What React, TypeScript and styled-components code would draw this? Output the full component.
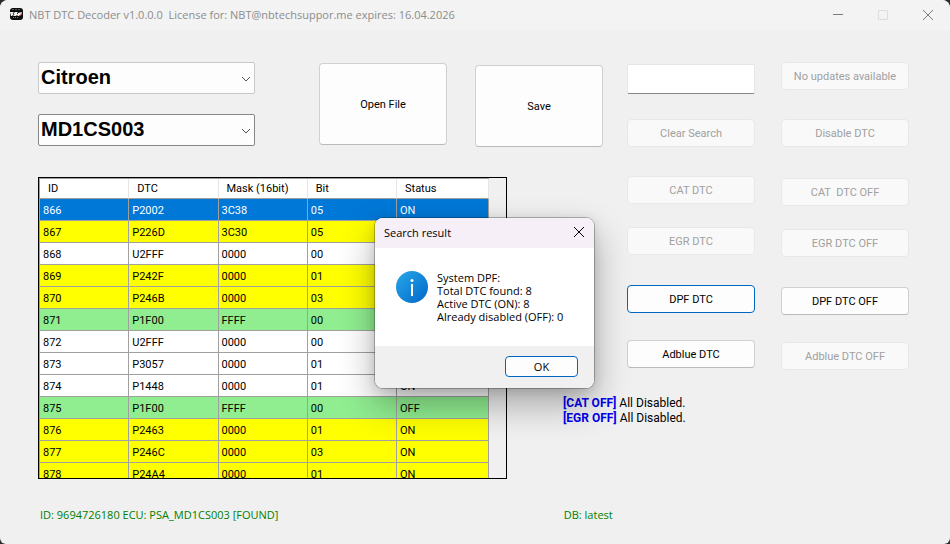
import React from "react";
import styled, { createGlobalStyle, css } from "styled-components";

const GlobalStyle = createGlobalStyle`
  * { box-sizing: border-box; }
  body { margin: 0; background: #2b2b2b; font-family: Roboto, "Liberation Sans", sans-serif; font-size: 11px; color: #000; }
  button, input, select { font: inherit; color: inherit; }
`;

const Window = styled.div`
  position: relative;
  display: flex;
  flex-direction: column;
  height: 100vh;
  background: #f0f0f0;
  border-radius: 8px 8px 6px 6px;
  overflow: hidden;
`;

const TitleBar = styled.header`
  display: flex;
  align-items: center;
  height: 30px;
  flex: none;
  padding-left: 9px;
  background: #f3f3f3;
`;

const AppTitle = styled.h1`
  flex: 1;
  margin: 0 0 0 6px;
  font: 400 11px/16px "Open Sans", sans-serif;
  color: #8c8c8c;
  white-space: pre;
`;

const CaptionButton = styled.button`
  display: flex;
  align-items: center;
  justify-content: center;
  width: 45px;
  height: 28px;
  padding: 0;
  border: 0;
  background: transparent;
  color: #7c7c7c;
  &:disabled { color: #dcdcdc; }
`;

const Body = styled.main`
  flex: 1;
  min-height: 0;
  display: grid;
  grid-template-columns: minmax(0, 469fr) 56px 40px 24px minmax(0, 282fr);
  grid-template-rows: 115px 216px minmax(0, 1fr);
  padding: 32px 41px 0 38px;
`;

const Toolbar = styled.div`
  grid-area: 1 / 1 / 2 / 4;
  display: flex;
  align-items: flex-start;
  gap: 28px;
`;

const Pickers = styled.div`
  flex: 1;
  display: flex;
  flex-direction: column;
  gap: 20px;
  margin-right: 36px;
`;

const Picker = styled.label`
  position: relative;
  display: block;
`;

const PickerSelect = styled.select<{ $strong?: boolean }>`
  appearance: none;
  display: block;
  width: 100%;
  height: 32px;
  padding: 0 24px 2px 2px;
  border: 1px solid ${(p) => (p.$strong ? "#868686" : "#c8c8c8")};
  border-radius: 2px;
  background: #fdfdfd;
  font: 700 20px/28px "Liberation Sans", sans-serif;
`;

const PickerArrow = styled.svg`
  position: absolute;
  right: 4px;
  top: 12px;
  pointer-events: none;
`;

const buttonLook = css`
  border: 1px solid #d0d0d0;
  border-bottom-color: #bababa;
  border-radius: 4px;
  background: #fdfdfd;
  padding: 0;
  &:disabled {
    border-color: #e8e8e8;
    background: #f9f9f9;
    color: #a0a0a0;
  }
`;

const FileButton = styled.button<{ $lowered?: boolean }>`
  ${buttonLook}
  flex: 0 0 128px;
  height: 82px;
  margin-top: ${(p) => (p.$lowered ? 3 : 1)}px;
`;

const ActionButton = styled.button<{ $focused?: boolean }>`
  ${buttonLook}
  width: 100%;
  height: 28px;
  white-space: pre;
  ${(p) => p.$focused && css`border-color: #0067c0;`}
`;

const Actions = styled.section`
  grid-area: 1 / 5 / 3 / 6;
  display: grid;
  grid-template-columns: 1fr 1fr;
  gap: 26px;
`;

const ActionColumn = styled.div<{ $lowered?: boolean }>`
  display: grid;
  align-content: start;
  grid-template-rows: 57px ${(p) => (p.$lowered ? 59 : 57)}px 51px 58px 55px 28px;
`;

const SearchInput = styled.input`
  width: 100%;
  height: 30px;
  margin-top: 2px;
  padding: 0 4px;
  border: 1px solid #e6e6e6;
  border-bottom-color: #868686;
  border-radius: 2px;
  background: #fff;
`;

const GridFrame = styled.div`
  grid-area: 2 / 1 / 4 / 2;
  min-height: 0;
  overflow: hidden;
  border: 1px solid #000;
`;

const DtcTable = styled.table`
  width: calc(100% - 17px);
  table-layout: fixed;
  border-spacing: 0;
  border-top: 1px solid #a0a0a0;
  border-left: 1px solid #a0a0a0;
`;

const HeadCell = styled.th`
  height: 20px;
  padding: 0 0 0 8px;
  background: #fff;
  border-right: 1px solid #e5e5e5;
  border-bottom: 1px solid #a0a0a0;
  font-weight: 400;
  text-align: left;
  white-space: nowrap;
  &:last-child { width: 92px; }
`;

type Tone = "selected" | "yellow" | "white" | "green";
const tones: Record<Tone, string> = {
  selected: "#0078d7",
  yellow: "#ffff00",
  white: "#ffffff",
  green: "#90ee90",
};

const DtcRow = styled.tr<{ $tone: Tone }>`
  background: ${(p) => tones[p.$tone]};
  color: ${(p) => (p.$tone === "selected" ? "#fff" : "#000")};
`;

const Cell = styled.td`
  height: 22px;
  padding: 1px 0 0 3px;
  border-right: 1px solid #a0a0a0;
  border-bottom: 1px solid #a0a0a0;
`;

const Notes = styled.section`
  grid-area: 3 / 3 / 4 / 6;
  padding-top: 3px;
  font-size: 12px;
  line-height: 15px;
`;

const Note = styled.p`
  margin: 0;
  strong { color: #0000f0; }
`;

const StatusBar = styled.footer`
  flex: none;
  display: grid;
  grid-template-columns: minmax(0, 469fr) 56px 64px minmax(0, 282fr);
  height: 65px;
  padding: 29px 41px 0 40px;
  color: #008000;
  font-family: "Open Sans", sans-serif;
  line-height: 14px;
`;

const StatusText = styled.span<{ $column: number }>`
  grid-column: ${(p) => p.$column};
  white-space: nowrap;
`;

const Dialog = styled.section`
  position: absolute;
  left: calc(50% - 100px);
  top: 218px;
  width: 219px;
  border-radius: 8px;
  background: #fff;
  box-shadow: 0 0 0 1px rgba(0, 0, 0, 0.25), 0 16px 36px rgba(0, 0, 0, 0.32), 0 2px 12px rgba(0, 0, 0, 0.12);
  overflow: hidden;
  font-family: "Open Sans", sans-serif;
`;

const DialogHeader = styled.header`
  display: flex;
  align-items: center;
  justify-content: space-between;
  height: 30px;
  padding: 0 7px 2px 9px;
  background: #f7eff8;
`;

const DialogTitle = styled.h2`
  margin: 0;
  font: inherit;
`;

const DialogClose = styled.button`
  display: flex;
  padding: 2px;
  border: 0;
  background: transparent;
`;

const DialogBody = styled.div`
  display: flex;
  gap: 9px;
  height: 98px;
  padding: 23px 20px 0 21px;
`;

const DialogMessage = styled.p`
  margin: 0;
  line-height: 13px;
  white-space: pre;
`;

const DialogFooter = styled.footer`
  display: flex;
  justify-content: flex-end;
  height: 42px;
  padding: 10px 16px 0;
  background: #f0f0f0;
`;

const OkButton = styled.button`
  width: 73px;
  height: 21px;
  padding: 0;
  border: 1px solid #0067c0;
  border-radius: 4px;
  background: #fdfdfd;
`;

const rows: [string, string, string, string, string, Tone][] = [
  ["866", "P2002", "3C38", "05", "ON", "selected"],
  ["867", "P226D", "3C30", "05", "ON", "yellow"],
  ["868", "U2FFF", "0000", "00", "ON", "white"],
  ["869", "P242F", "0000", "01", "ON", "yellow"],
  ["870", "P246B", "0000", "03", "ON", "yellow"],
  ["871", "P1F00", "FFFF", "00", "OFF", "green"],
  ["872", "U2FFF", "0000", "00", "ON", "white"],
  ["873", "P3057", "0000", "01", "ON", "white"],
  ["874", "P1448", "0000", "01", "ON", "white"],
  ["875", "P1F00", "FFFF", "00", "OFF", "green"],
  ["876", "P2463", "0000", "01", "ON", "yellow"],
  ["877", "P246C", "0000", "03", "ON", "yellow"],
  ["878", "P24A4", "0000", "01", "ON", "yellow"],
];

const AppIcon = () => (
  <svg width="14" height="14" viewBox="0 0 14 14" aria-hidden="true">
    <rect x="1" y="0" width="13" height="12" rx="3" fill="#0c0c0c" />
    <path d="M3 1.5h8" stroke="#555" strokeWidth="1" strokeDasharray="2 1" />
    <path d="M1 4h3l1 1 1-1h2l1 1 4-1-1 3-2 1H9L8 7 7 8H5L4 7 3 8H2z" fill="#f4f4f4" />
    <path d="M4 5l1 2M8 5l1 1" stroke="#222" strokeWidth="1" />
    <path d="M10 8l3-2" stroke="#d33" strokeWidth="1" />
    <path d="M4 9.5h6" stroke="#777" strokeWidth="1" strokeDasharray="1 1" />
  </svg>
);

const CloseIcon = () => (
  <svg width="12" height="12" viewBox="0 0 12 12" fill="none" stroke="currentColor" aria-hidden="true">
    <path d="M1 1l10 10M11 1L1 11" />
  </svg>
);

const InfoIcon = () => (
  <svg width="32" height="32" viewBox="0 0 32 32" aria-hidden="true">
    <defs>
      <linearGradient id="info" x1="0" y1="0" x2="1" y2="1">
        <stop offset="0" stopColor="#28a8ea" />
        <stop offset="1" stopColor="#0067c8" />
      </linearGradient>
    </defs>
    <circle cx="16" cy="16" r="16" fill="url(#info)" />
    <circle cx="16" cy="9.5" r="1.5" fill="#fff" />
    <path d="M16 13v12" stroke="#fff" strokeWidth="2" />
  </svg>
);

const Combo = ({ label, value, strong }: { label: string; value: string; strong?: boolean }) => (
  <Picker>
    <PickerSelect aria-label={label} defaultValue={value} $strong={strong}>
      <option>{value}</option>
    </PickerSelect>
    <PickerArrow width="10" height="10" viewBox="0 0 10 10" fill="none" stroke="#555" aria-hidden="true">
      <path d="M1 3l4 4 4-4" />
    </PickerArrow>
  </Picker>
);

export default function App() {
  return (
    <>
      <GlobalStyle />
      <Window>
        <TitleBar>
          <AppIcon />
          <AppTitle>{"NBT DTC Decoder v1.0.0.0  License for: NBT@nbtechsuppor.me expires: 16.04.2026"}</AppTitle>
          <CaptionButton aria-label="Minimize">
            <svg width="10" height="10" viewBox="0 0 10 10" stroke="currentColor" aria-hidden="true"><path d="M0 4.5h10" /></svg>
          </CaptionButton>
          <CaptionButton aria-label="Maximize" disabled>
            <svg width="10" height="10" viewBox="0 0 10 10" fill="none" stroke="currentColor" aria-hidden="true"><rect x="0.5" y="0.5" width="9" height="9" rx="0.5" /></svg>
          </CaptionButton>
          <CaptionButton aria-label="Close"><CloseIcon /></CaptionButton>
        </TitleBar>

        <Body>
          <Toolbar>
            <Pickers>
              <Combo label="Brand" value="Citroen" />
              <Combo label="ECU type" value="MD1CS003" strong />
            </Pickers>
            <FileButton>Open File</FileButton>
            <FileButton $lowered>Save</FileButton>
          </Toolbar>

          <Actions>
            <ActionColumn>
              <SearchInput aria-label="Search DTC" />
              <ActionButton disabled>Clear Search</ActionButton>
              <ActionButton disabled>CAT DTC</ActionButton>
              <ActionButton disabled>EGR DTC</ActionButton>
              <ActionButton $focused>DPF DTC</ActionButton>
              <ActionButton>Adblue DTC</ActionButton>
            </ActionColumn>
            <ActionColumn $lowered>
              <ActionButton disabled>No updates available</ActionButton>
              <ActionButton disabled>Disable DTC</ActionButton>
              <ActionButton disabled>{"CAT  DTC OFF"}</ActionButton>
              <ActionButton disabled>EGR DTC OFF</ActionButton>
              <ActionButton>DPF DTC OFF</ActionButton>
              <ActionButton disabled>Adblue DTC OFF</ActionButton>
            </ActionColumn>
          </Actions>

          <GridFrame>
            <DtcTable>
              <thead>
                <tr>
                  {["ID", "DTC", "Mask (16bit)", "Bit", "Status"].map((h) => (
                    <HeadCell key={h} scope="col">{h}</HeadCell>
                  ))}
                </tr>
              </thead>
              <tbody>
                {rows.map(([id, dtc, mask, bit, status, tone]) => (
                  <DtcRow key={id} $tone={tone}>
                    <Cell>{id}</Cell>
                    <Cell>{dtc}</Cell>
                    <Cell>{mask}</Cell>
                    <Cell>{bit}</Cell>
                    <Cell>{status}</Cell>
                  </DtcRow>
                ))}
              </tbody>
            </DtcTable>
          </GridFrame>

          <Notes>
            <Note><strong>[CAT OFF]</strong> All Disabled.</Note>
            <Note><strong>[EGR OFF]</strong> All Disabled.</Note>
          </Notes>
        </Body>

        <StatusBar>
          <StatusText $column={1}>ID: 9694726180 ECU: PSA_MD1CS003 [FOUND]</StatusText>
          <StatusText $column={3}>DB: latest</StatusText>
        </StatusBar>

        <Dialog role="dialog" aria-labelledby="dialog-title">
          <DialogHeader>
            <DialogTitle id="dialog-title">Search result</DialogTitle>
            <DialogClose aria-label="Close dialog"><CloseIcon /></DialogClose>
          </DialogHeader>
          <DialogBody>
            <InfoIcon />
            <DialogMessage>{"System DPF:\nTotal DTC found: 8\nActive DTC (ON): 8\nAlready disabled (OFF): 0"}</DialogMessage>
          </DialogBody>
          <DialogFooter>
            <OkButton>OK</OkButton>
          </DialogFooter>
        </Dialog>
      </Window>
    </>
  );
}
